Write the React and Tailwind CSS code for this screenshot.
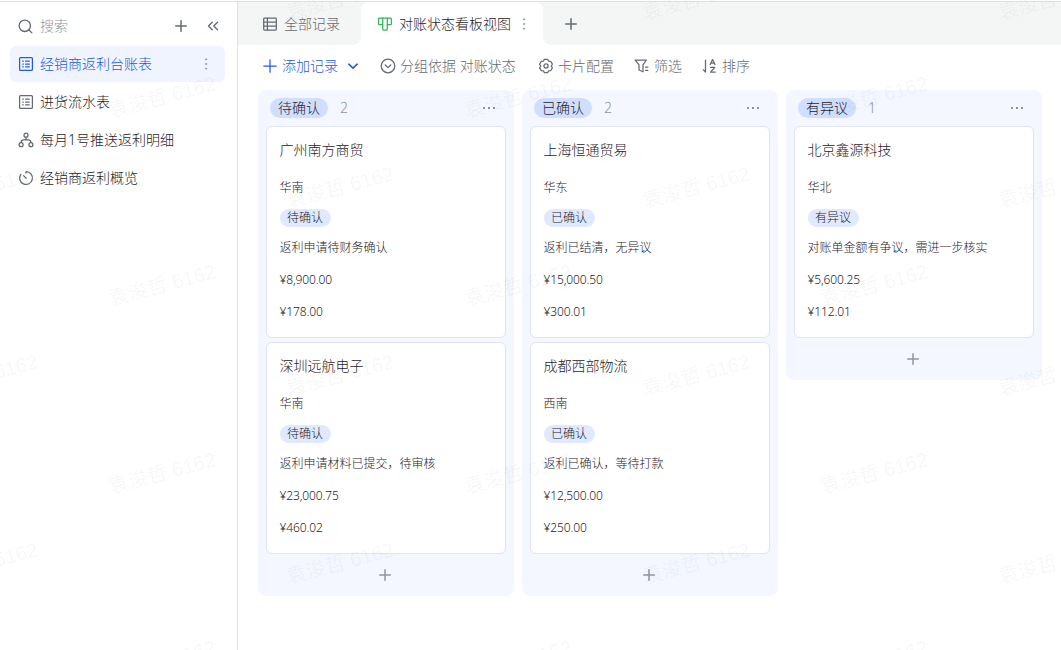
import React from 'react';
import { ChevronsLeft, MoreVertical, Plus, Search } from 'lucide-react';

const columns = [
    {
        status: '待确认',
        cards: [
            { name: '广州南方商贸', region: '华南', note: '返利申请待财务确认', amount: '¥8,900.00', rebate: '¥178.00' },
            { name: '深圳远航电子', region: '华南', note: '返利申请材料已提交，待审核', amount: '¥23,000.75', rebate: '¥460.02' },
        ],
    },
    {
        status: '已确认',
        cards: [
            { name: '上海恒通贸易', region: '华东', note: '返利已结清，无异议', amount: '¥15,000.50', rebate: '¥300.01' },
            { name: '成都西部物流', region: '西南', note: '返利已确认，等待打款', amount: '¥12,500.00', rebate: '¥250.00' },
        ],
    },
    {
        status: '有异议',
        cards: [
            { name: '北京鑫源科技', region: '华北', note: '对账单金额有争议，需进一步核实', amount: '¥5,600.25', rebate: '¥112.01' },
        ],
    },
];

function Icon({ children, className = '' }) {
    return (
        <svg
            viewBox="0 0 16 16"
            fill="none"
            stroke="currentColor"
            strokeWidth="1.25"
            strokeLinecap="round"
            strokeLinejoin="round"
            className={`w-4 h-4 shrink-0 ${className}`}
        >
            {children}
        </svg>
    );
}

function TableIcon() {
    return (
        <Icon>
            <rect x="1.6" y="1.6" width="12.8" height="12.8" rx="1" />
            <path d="M4.7 5.2h.6M4.7 8h.6M4.7 10.8h.6M7.6 5.2h3.7M7.6 8h3.7M7.6 10.8h3.7" />
        </Icon>
    );
}

function FlowIcon() {
    return (
        <Icon>
            <circle cx="8" cy="3.2" r="2" />
            <circle cx="3.1" cy="12.7" r="2" />
            <circle cx="12.9" cy="12.7" r="2" />
            <path d="M8 5.3v2.6M3.1 10.6c0-1.9.9-2.7 2.5-2.7h4.8c1.6 0 2.5.8 2.5 2.7" />
        </Icon>
    );
}

function GaugeIcon() {
    return (
        <Icon>
            <path d="M8 1.6a6.4 6.4 0 1 1-5.2 2.7M8 1.6v1.5M5.6 5.6l2.6 2.6" />
        </Icon>
    );
}

function GridIcon() {
    return (
        <Icon>
            <rect x="1.7" y="2" width="12.6" height="12" rx=".8" />
            <path d="M5.4 2v12M1.7 6h12.6M1.7 10h12.6" />
        </Icon>
    );
}

function KanbanIcon() {
    return (
        <Icon className="text-[#34b35a]">
            <path d="M5.7 2H2.6a1 1 0 0 0-1 1v4.7a1 1 0 0 0 1 1h3.1" />
            <path d="M5.7 2h4.6v11a1 1 0 0 1-1 1H6.7a1 1 0 0 1-1-1z" />
            <path d="M10.3 2h3.1a1 1 0 0 1 1 1v4.7a1 1 0 0 1-1 1h-3.1" />
        </Icon>
    );
}

function Dots() {
    return (
        <svg viewBox="0 0 16 16" fill="currentColor" className="w-4 h-4 text-[#646a73]">
            <circle cx="3" cy="8" r=".95" />
            <circle cx="8" cy="8" r=".95" />
            <circle cx="13" cy="8" r=".95" />
        </svg>
    );
}

function SideItem({ icon, label, active }) {
    return (
        <div
            className={`flex items-center h-9 mb-0.5 px-2 rounded-md gap-[6px] ${
                active ? 'bg-[#f0f4ff] text-[#245bdb]' : 'text-[#646a73]'
            }`}
        >
            {icon}
            <span className={active ? 'flex-1' : 'flex-1 text-[#1f2329]'}>{label}</span>
            {active && <MoreVertical className="w-4 h-4 mr-[3px] text-[#8f959e]" strokeWidth={1.3} />}
        </div>
    );
}

function Sidebar() {
    return (
        <aside className="w-[238px] shrink-0 border-r border-[#dee0e3] pl-[10px] pr-3">
            <div className="flex items-center h-11 pt-1 pl-[7px] text-[#646a73]">
                <Search className="w-[17px] h-[17px]" strokeWidth={1.9} />
                <span className="flex-1 ml-[6px] text-[#8f959e]">搜索</span>
                <Plus className="w-[18px] h-[18px] mr-[14px]" strokeWidth={2} />
                <ChevronsLeft className="w-[18px] h-[18px] mr-[3px]" strokeWidth={1.8} />
            </div>
            <SideItem icon={<TableIcon />} label="经销商返利台账表" active />
            <SideItem icon={<TableIcon />} label="进货流水表" />
            <SideItem icon={<FlowIcon />} label="每月1号推送返利明细" />
            <SideItem icon={<GaugeIcon />} label="经销商返利概览" />
        </aside>
    );
}

function Tabs() {
    return (
        <div className="flex h-[43px] bg-[#f4f5f5] text-[#646a73]">
            <div className="flex items-center w-[123px] pl-6 gap-[6px]">
                <GridIcon />
                <span>全部记录</span>
            </div>
            <div className="relative flex items-center w-[182px] pl-4 bg-white rounded-t-lg">
                <KanbanIcon />
                <span className="ml-[6px] text-[#1f2329]">对账状态看板视图</span>
                <MoreVertical className="w-4 h-4 ml-[5px] text-[#8f959e]" strokeWidth={1.3} />
                {/* curved feet of the active tab */}
                <i className="absolute bottom-0 -left-2 w-2 h-2 bg-white" />
                <i className="absolute bottom-0 -left-2 w-2 h-2 bg-[#f4f5f5] rounded-br-lg" />
                <i className="absolute bottom-0 -right-2 w-2 h-2 bg-white" />
                <i className="absolute bottom-0 -right-2 w-2 h-2 bg-[#f4f5f5] rounded-bl-lg" />
            </div>
            <div className="flex items-center pl-[19px]">
                <Plus className="w-[18px] h-[18px]" strokeWidth={2} />
            </div>
        </div>
    );
}

function Toolbar() {
    return (
        <div className="flex items-center h-[45px] pb-[3px] pl-6 text-[#646a73]">
            <div className="flex items-center w-[118px] text-[#245bdb]">
                <Icon>
                    <path d="M8 1.8v12.4M1.8 8h12.4" />
                </Icon>
                <span className="ml-1">添加记录</span>
                <Icon className="ml-[7px]">
                    <path d="M3.8 6.2 8 10.2l4.2-4" strokeWidth="1.6" />
                </Icon>
            </div>
            <div className="flex items-center w-[158px] gap-1">
                <Icon>
                    <circle cx="8" cy="8" r="6.8" />
                    <path d="m5.2 7 2.8 2.6L10.8 7" />
                </Icon>
                <span>分组依据 对账状态</span>
            </div>
            <div className="flex items-center w-[96px] gap-1">
                <Icon>
                    <path d="M6.4 1.4h3.2l1 1.8 2.1.1 1.7 2.8L13.3 8l1.1 1.9-1.7 2.8-2.1.1-1 1.8H6.4l-1-1.8-2.1-.1-1.7-2.8L2.7 8 1.6 6.1l1.7-2.8 2.1-.1z" />
                    <circle cx="8" cy="8" r="2.1" />
                </Icon>
                <span>卡片配置</span>
            </div>
            <div className="flex items-center w-[68px] gap-1">
                <Icon>
                    <path d="M1.2 2h11.2L9 6.8v7L5 12V6.8zM11.6 9.2h2.2M11.6 12.4h2.2" />
                </Icon>
                <span>筛选</span>
            </div>
            <div className="flex items-center gap-1">
                <Icon>
                    <path d="M3.5 2v12L1.4 11.8M8.2 6.6l2.4-5 2.4 5M9 5.2h3.2M8.6 9.4h4.2l-4.2 4.8h4.6" />
                </Icon>
                <span>排序</span>
            </div>
        </div>
    );
}

function Card({ card, status }) {
    return (
        <div className="h-[212px] pt-[11px] pl-[12.5px] bg-white border border-[#e2e5ee] rounded-md text-xs text-[#1f2329]">
            <div className="h-6 leading-6 text-sm">{card.name}</div>
            <div className="h-5 leading-5 mt-4">{card.region}</div>
            <div className="flex items-center h-5 mt-[10px]">
                <span className="h-[18px] leading-[18px] px-[7.5px] rounded-full bg-[#e0e9ff]">{status}</span>
            </div>
            <div className="h-5 leading-5 mt-[10px]">{card.note}</div>
            <div className="h-5 leading-5 mt-3 tracking-[-0.12px]">{card.amount}</div>
            <div className="h-5 leading-5 mt-3 tracking-[-0.12px]">{card.rebate}</div>
        </div>
    );
}

function Column({ status, cards }) {
    return (
        <section className="w-64 shrink-0 px-2 rounded-lg bg-[#f4f7ff]">
            <div className="flex items-center h-9 pl-1 pr-[9px] text-[#1f2329]">
                <span className="h-5 leading-5 px-2 rounded-full bg-[#d0deff]">{status}</span>
                <span className="flex-1 ml-3 text-[#8f959e]">{cards.length}</span>
                <Dots />
            </div>
            <div className="flex flex-col gap-1">
                {cards.map((card) => (
                    <Card key={card.name} card={card} status={status} />
                ))}
            </div>
            <div className="flex items-center justify-center h-[42px] pr-[2px] text-[#8f959e]">
                <Plus className="w-[18px] h-[18px]" strokeWidth={2} />
            </div>
        </section>
    );
}

// staggered grid of user marks drawn over the whole window
function Watermark() {
    const marks = [];
    for (let col = 0; col < 7; col++) {
        for (let row = 0; row < 4; row++) {
            marks.push({ x: -16 + col * 178, y: (col % 2 ? 97 : 187) + row * 188 });
        }
    }
    // the top row only shows its right-hand columns
    [340, 696, 1052].forEach((x) => marks.push({ x, y: -1 }));
    return (
        <div className="absolute inset-0 overflow-hidden pointer-events-none select-none">
            {marks.filter(({ y }) => y < 670).map(({ x, y }) => (
                <span
                    key={`${x}-${y}`}
                    className="absolute w-32 h-6 -ml-16 -mt-3 leading-6 text-center text-xl font-normal whitespace-nowrap -rotate-[15deg] text-[#1f2329]/5 font-['Liberation_Sans','Noto_Sans_CJK_SC',sans-serif]"
                    style={{ left: x, top: y }}
                >
                    袁浚哲 6162
                </span>
            ))}
        </div>
    );
}

export default function App() {
    return (
        <div className="relative flex w-full h-[650px] overflow-hidden pt-px bg-white text-sm font-light font-['Noto_Sans','Noto_Sans_CJK_SC',sans-serif]">
            <div className="flex flex-1 min-w-0 border-t border-[#dee0e3]">
                <Sidebar />
                <main className="flex-1 min-w-0">
                    <Tabs />
                    <Toolbar />
                    <div className="flex items-start gap-2 pl-5">
                        {columns.map((column) => (
                            <Column key={column.status} {...column} />
                        ))}
                    </div>
                </main>
            </div>
            <Watermark />
        </div>
    );
}
